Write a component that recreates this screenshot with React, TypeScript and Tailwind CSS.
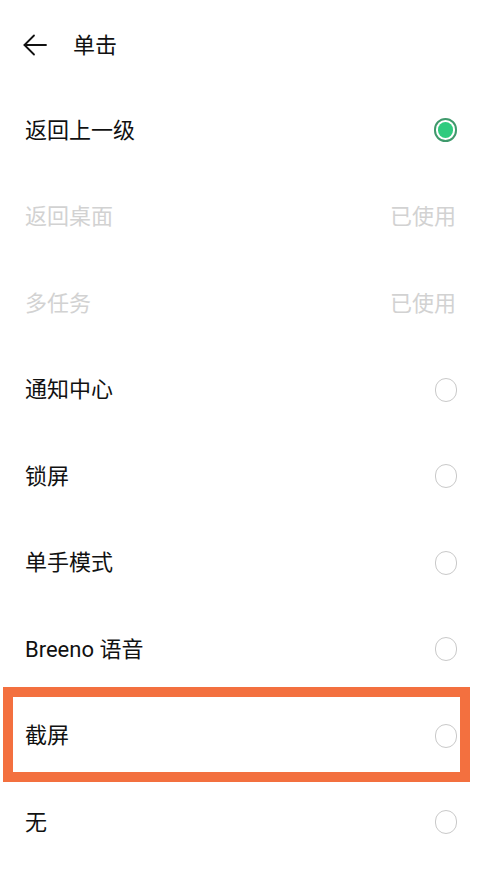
type Option = {
    label: string;
    used?: boolean;
    selected?: boolean;
    highlight?: boolean;
};

const options: Option[] = [
    { label: '返回上一级', selected: true },
    { label: '返回桌面', used: true },
    { label: '多任务', used: true },
    { label: '通知中心' },
    { label: '锁屏' },
    { label: '单手模式' },
    { label: 'Breeno 语音' },
    { label: '截屏', highlight: true },
    { label: '无' },
];

function Radio({ selected }: { selected?: boolean }) {
    if (selected) {
        return (
            <div className="w-[23px] h-[24px] rounded-full border-[2px] border-[#3f9a6c] bg-white flex items-center justify-center">
                <div className="w-[15px] h-[16px] rounded-full bg-[#2fcb7e]" />
            </div>
        );
    }
    return <div className="w-[22px] h-[24px] rounded-full border-[1.5px] border-[#c9c9c9]" />;
}

export default function App() {
    return (
        <div
            className="w-[479px] h-[869px] bg-white overflow-hidden text-[#111]"
            style={{ fontFamily: 'Roboto, "Noto Sans CJK SC", sans-serif' }}
        >
            {/* Header */}
            <div className="h-[87px] pt-[3px] flex items-center pl-[23px]">
                <svg width="24" height="22" viewBox="0 0 24 22" fill="none" stroke="#111" strokeWidth="1.8" strokeLinecap="round" strokeLinejoin="round">
                    <path d="M11 1.5 L1.5 11 L11 20.5" />
                    <path d="M1.5 11 H23" />
                </svg>
                <span className="ml-[26px] text-[22px]">单击</span>
            </div>

            {/* Options */}
            <div className="flex flex-col">
                {options.map((opt) => (
                    <div key={opt.label} className="relative h-[86.5px] flex items-center justify-between pl-[25px] pr-[22px]">
                        <span className={`text-[22px] ${opt.used ? 'text-[#d2d2d2]' : 'text-[#111]'}`}>{opt.label}</span>
                        {opt.used ? (
                            <span className="text-[22px] text-[#d2d2d2] mr-[1px]">已使用</span>
                        ) : (
                            <Radio selected={opt.selected} />
                        )}
                        {opt.highlight && (
                            <div className="absolute top-[-6px] bottom-[-3px] left-[3px] right-[9px] border-[10px] border-[#f3703f] pointer-events-none" />
                        )}
                    </div>
                ))}
            </div>
        </div>
    );
}
